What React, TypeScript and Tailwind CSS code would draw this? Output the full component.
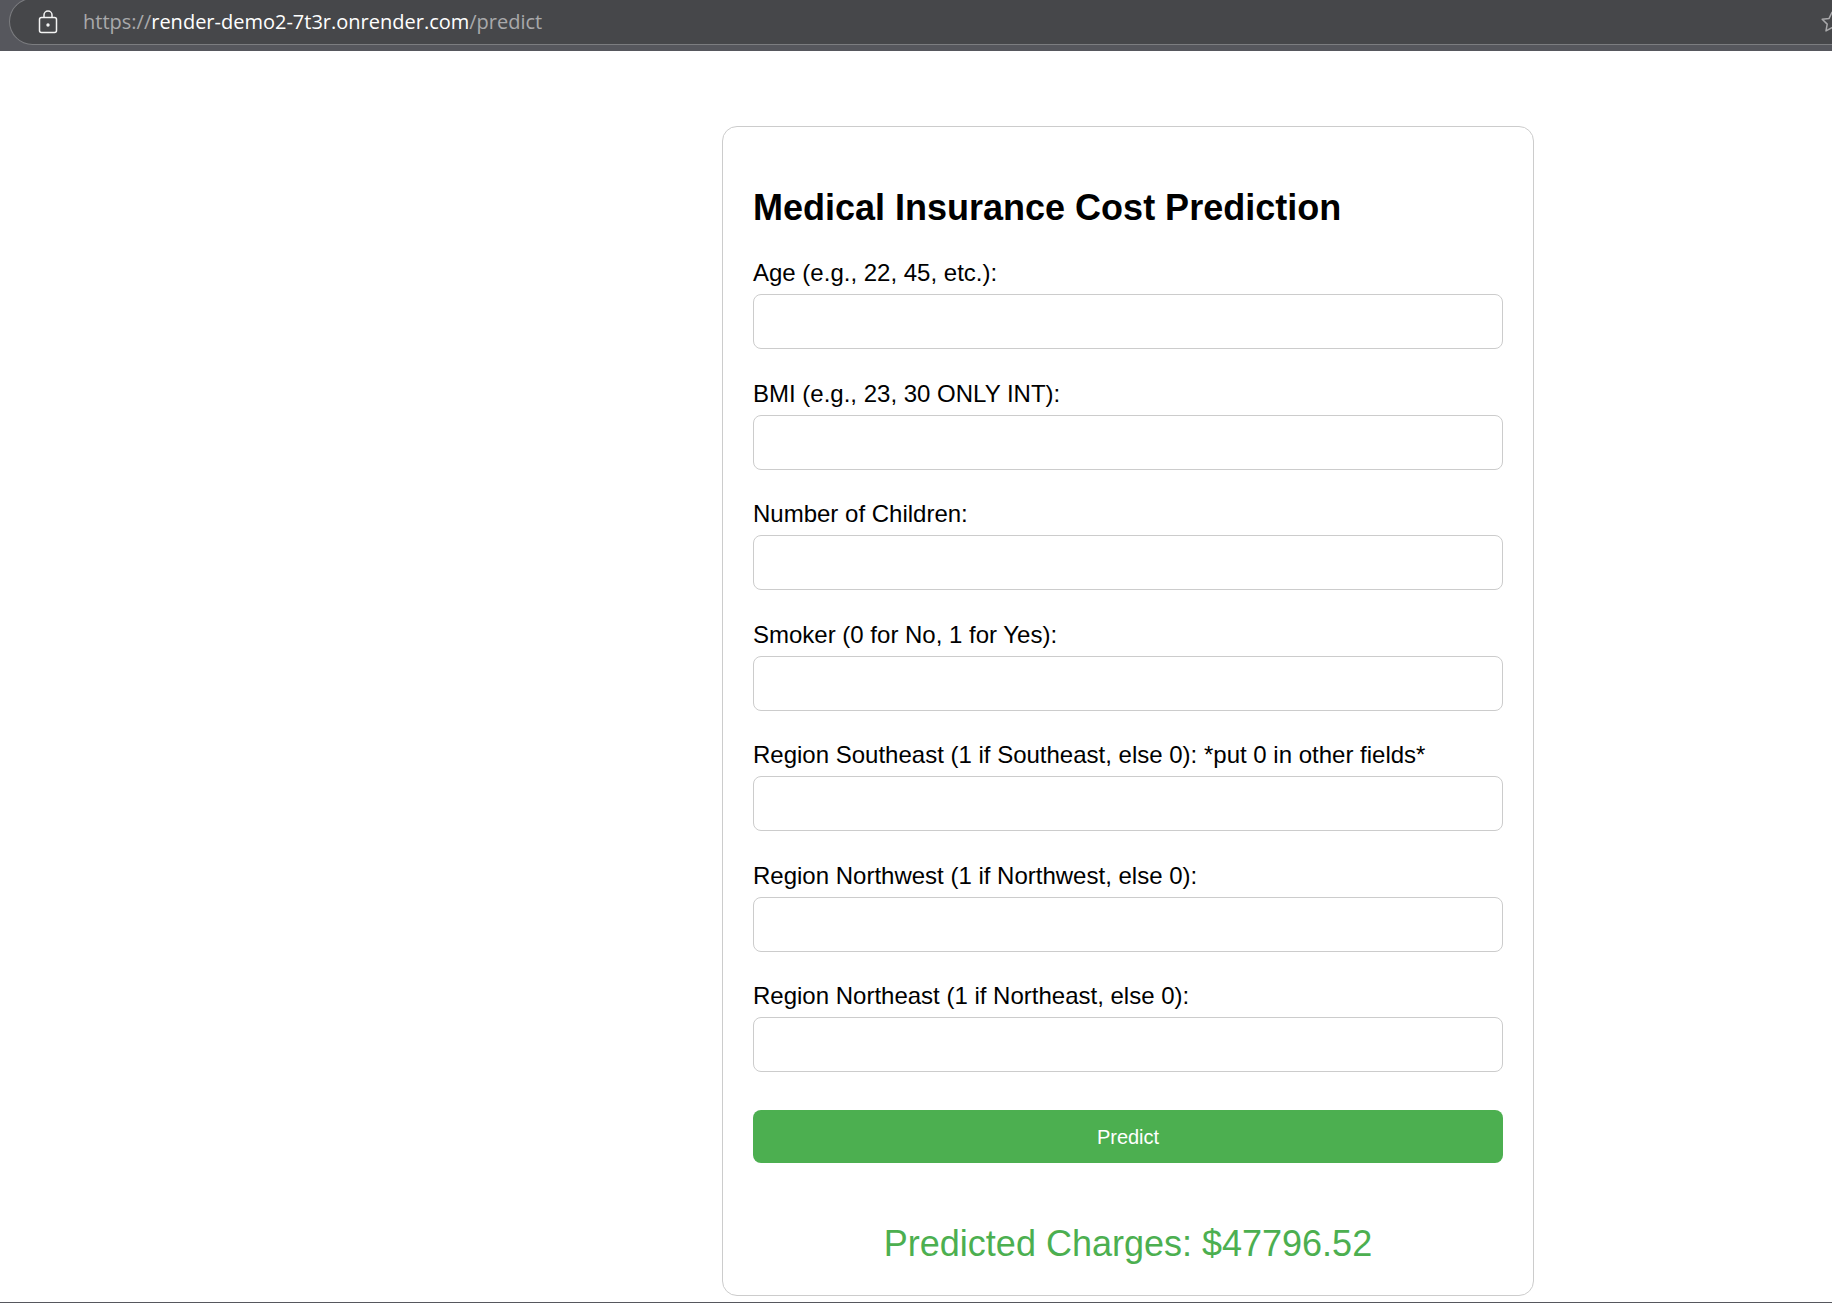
import React from "react";

const fields = [
  { id: "age", label: "Age (e.g., 22, 45, etc.):" },
  { id: "bmi", label: "BMI (e.g., 23, 30 ONLY INT):" },
  { id: "children", label: "Number of Children:" },
  { id: "smoker", label: "Smoker (0 for No, 1 for Yes):" },
  { id: "southeast", label: "Region Southeast (1 if Southeast, else 0): *put 0 in other fields*" },
  { id: "northwest", label: "Region Northwest (1 if Northwest, else 0):" },
  { id: "northeast", label: "Region Northeast (1 if Northeast, else 0):" },
];

function LockIcon() {
  return (
    <svg width="20" height="24" viewBox="0 0 20 24" fill="none" stroke="#f4f4f4" strokeWidth="1.5">
      <rect x="1.5" y="7.5" width="17" height="15" rx="2" />
      <path d="M6 7.5V5a4 4 0 0 1 8 0v2.5" />
      <circle cx="10" cy="15" r="1.7" fill="#f4f4f4" stroke="none" />
    </svg>
  );
}

function StarIcon() {
  return (
    <svg width="22" height="22" viewBox="0 0 22 22" fill="none" stroke="#a9a9ab" strokeWidth="1.5" strokeLinejoin="round">
      <path d="M11 1.2 13.9 7.4 20.8 8.3 15.8 13.1 17 19.9 11 16.7 5 19.9 6.2 13.1 1.2 8.3 8.1 7.4Z" />
    </svg>
  );
}

function AddressBar() {
  return (
    <header className="flex h-[51px] shrink-0 items-start overflow-hidden bg-[#56575d] pl-[9px]">
      <div className="-mt-0.5 flex h-[47px] min-w-0 flex-1 items-center rounded-l-full border border-r-0 border-[#7c7d80] bg-[#46474a] pl-7">
        <button type="button" aria-label="View site information" className="shrink-0">
          <LockIcon />
        </button>
        <div
          role="textbox"
          aria-label="Address"
          tabIndex={0}
          className="ml-[25px] min-w-0 flex-1 truncate font-['Open_Sans',sans-serif] text-[20px] leading-7 text-[#a9a9ab]"
        >
          https://<span className="text-white">render-demo2-7t3r.onrender.com</span>/predict
        </div>
        <button type="button" aria-label="Add to favorites" className="-mr-[11px] shrink-0">
          <StarIcon />
        </button>
      </div>
    </header>
  );
}

export default function App() {
  return (
    <div className="flex min-h-screen flex-col overflow-hidden border-b border-[#56575d] bg-white font-['Liberation_Sans',Arial,sans-serif] text-black">
      <AddressBar />
      <main className="grid flex-1 grid-cols-[722fr_minmax(0,812px)_298fr] pt-[75px] pb-[6px]">
        <section className="col-start-2 flex flex-col rounded-[15px] border border-[#cccccc] p-[30px]">
          <h2 className="mt-[30px] mb-[30px] text-[36px] leading-[42px] font-bold">
            Medical Insurance Cost Prediction
          </h2>
          <form className="flex flex-1 flex-col" onSubmit={(e) => e.preventDefault()}>
            <div className="flex flex-1 flex-col justify-between">
              {fields.map((f) => (
                <div key={f.id} className="flex flex-col gap-[7px]">
                  <label htmlFor={f.id} className="text-[24px] leading-7">
                    {f.label}
                  </label>
                  <input
                    id={f.id}
                    name={f.id}
                    type="text"
                    className="h-[55px] w-full rounded-[8px] border border-[#cccccc] bg-white px-4 text-[20px]"
                  />
                </div>
              ))}
            </div>
            <button
              type="submit"
              className="mt-[38px] h-[53px] w-full rounded-[8px] bg-[#4caf50] text-[20px] leading-6 text-white"
            >
              Predict
            </button>
          </form>
          <p className="mt-[60px] text-center text-[36px] leading-[42px] text-[#4caf50]">
            Predicted Charges: $47796.52
          </p>
        </section>
      </main>
    </div>
  );
}
